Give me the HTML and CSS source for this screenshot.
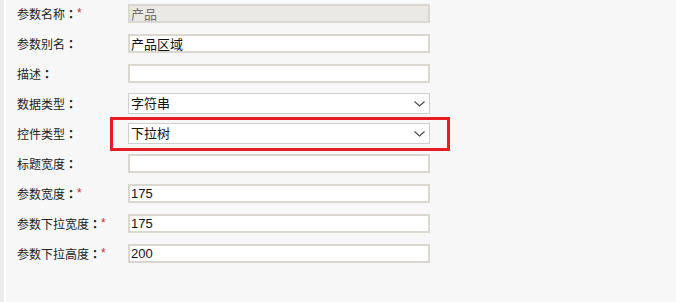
FILE: index.html
```html
<!DOCTYPE html>
<html>
  <head>
    <title>参数设置</title>
    <link rel="stylesheet" href="styles.css">
  </head>
  <body>
    <div class="page">
      <div class="side"></div>
      <form class="param-form">
        <div class="row">
          <label class="label">参数名称<span class="colon">：</span><span class="req">*</span></label>
          <input class="field disabled" type="text" value="产品" disabled>
        </div>
        <div class="row">
          <label class="label">参数别名<span class="colon">：</span></label>
          <input class="field" type="text" value="产品区域">
        </div>
        <div class="row">
          <label class="label">描述<span class="colon">：</span></label>
          <input class="field" type="text" value="">
        </div>
        <div class="row">
          <label class="label">数据类型<span class="colon">：</span></label>
          <div class="select-wrap">
            <select class="field select">
              <option>字符串</option>
            </select>
            <svg class="chevron" width="11" height="6" viewBox="0 0 11 6"><path d="M0.5 0.5 L5.5 5 L10.5 0.5" fill="none" stroke="#444" stroke-width="1.1"/></svg>
          </div>
        </div>
        <div class="row">
          <label class="label">控件类型<span class="colon">：</span></label>
          <div class="select-wrap">
            <select class="field select">
              <option>下拉树</option>
            </select>
            <svg class="chevron" width="11" height="6" viewBox="0 0 11 6"><path d="M0.5 0.5 L5.5 5 L10.5 0.5" fill="none" stroke="#444" stroke-width="1.1"/></svg>
            <div class="highlight"></div>
          </div>
        </div>
        <div class="row">
          <label class="label">标题宽度<span class="colon">：</span></label>
          <input class="field" type="text" value="">
        </div>
        <div class="row">
          <label class="label">参数宽度<span class="colon">：</span><span class="req">*</span></label>
          <input class="field" type="text" value="175">
        </div>
        <div class="row">
          <label class="label">参数下拉宽度<span class="colon">：</span><span class="req">*</span></label>
          <input class="field" type="text" value="175">
        </div>
        <div class="row">
          <label class="label">参数下拉高度<span class="colon">：</span><span class="req">*</span></label>
          <input class="field" type="text" value="200">
        </div>
      </form>
    </div>
  </body>
</html>
```

FILE: styles.css
```css
body {
  margin: 0;
  font-family: "Liberation Sans", "Noto Sans CJK SC", sans-serif;
  background-color: #f7f7f7;
}

.page {
  display: flex;
  min-height: 302px;
}

.side {
  width: 4px;
  background-color: #ececec;
  border-right: 2px solid #ffffff;
}

.param-form {
  padding: 4px 0 0 11px;
}

.row {
  display: flex;
  align-items: center;
  height: 19px;
  margin-bottom: 11px;
}

.label {
  width: 111px;
  font-size: 12px;
  color: #222;
  white-space: nowrap;
}

.colon {
  font-family: "Noto Sans CJK TC", sans-serif;
  font-weight: bold;
}

.req {
  color: #e0202a;
  font-size: 12px;
  position: relative;
  top: -2px;
}

.field {
  box-sizing: border-box;
  width: 302px;
  height: 19px;
  margin: 0;
  padding: 0 1px;
  border: 2px solid #dad7d0;
  background-color: #ffffff;
  font-family: "Liberation Sans", "Noto Sans CJK SC", sans-serif;
  font-size: 13px;
  color: #111;
  outline: none;
}

.field.disabled {
  background-color: #ebe9e3;
  color: #707070;
}

.select-wrap {
  position: relative;
  height: 21px;
}

.select {
  appearance: none;
  -webkit-appearance: none;
  height: 21px;
  border: 1px solid #cfcfcf;
  padding: 0 2px;
  border-radius: 0;
}

.chevron {
  position: absolute;
  right: 5px;
  top: 8px;
}

.highlight {
  position: absolute;
  top: -6px;
  left: -18px;
  right: -20px;
  bottom: -7px;
  border: 3px solid #e81c25;
  pointer-events: none;
}
```
